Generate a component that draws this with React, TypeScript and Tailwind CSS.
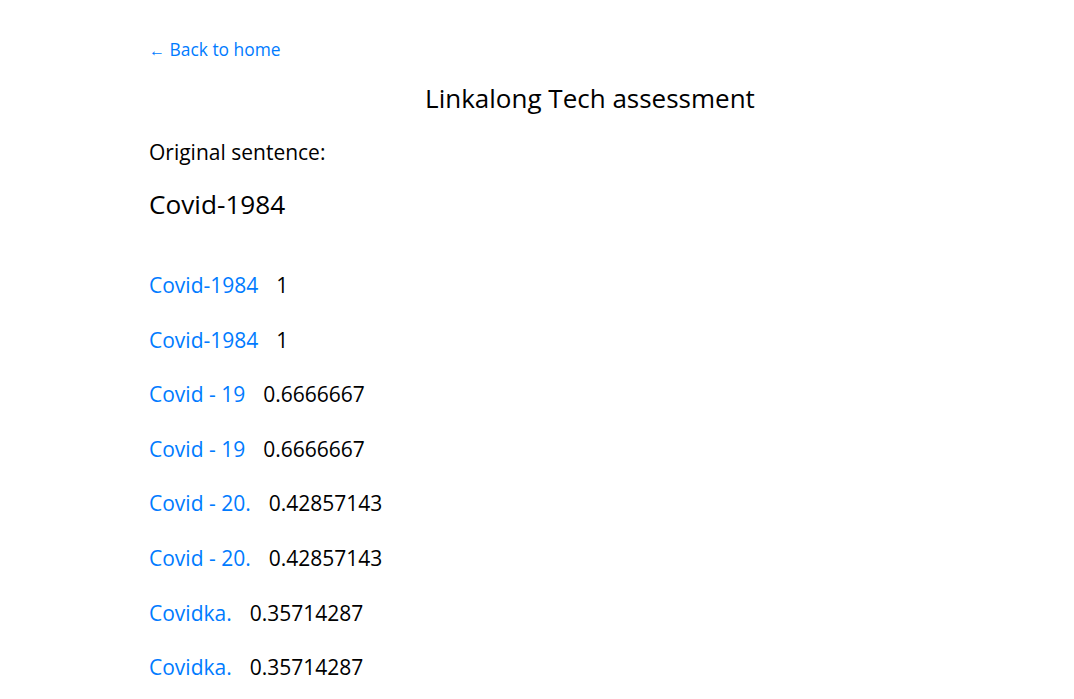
const results: [string, string][] = [
  ["Covid-1984", "1"],
  ["Covid-1984", "1"],
  ["Covid - 19", "0.6666667"],
  ["Covid - 19", "0.6666667"],
  ["Covid - 20.", "0.42857143"],
  ["Covid - 20.", "0.42857143"],
  ["Covidka.", "0.35714287"],
  ["Covidka.", "0.35714287"],
];

const App = () => {
  return (
    <div className="min-h-screen bg-white text-black font-['Open_Sans',sans-serif]">
      <div className="pl-[149px] pr-[43px] pt-[37px]">
        <a href="#" className="text-[#007bff] text-[17.4px] leading-[24px]">
          <span className="text-[16px]">←</span> Back to home
        </a>
        <h1 className="text-center text-[26px] leading-[32px] mt-[20px]">Linkalong Tech assessment</h1>
        <p className="text-[21px] leading-[26px] mt-[25px]">Original sentence:</p>
        <h2 className="text-[26.2px] leading-[32px] mt-[23px]">Covid-1984</h2>
        <div className="mt-[53px] flex flex-col gap-[30px]">
          {results.map(([text, score], i) => (
            <div key={i} className="flex items-center text-[21px] leading-[24.6px]">
              <a href="#" className="text-[#007bff]">{text}</a>
              <span className="ml-[18px]">{score}</span>
            </div>
          ))}
        </div>
      </div>
    </div>
  );
};

export default App;
